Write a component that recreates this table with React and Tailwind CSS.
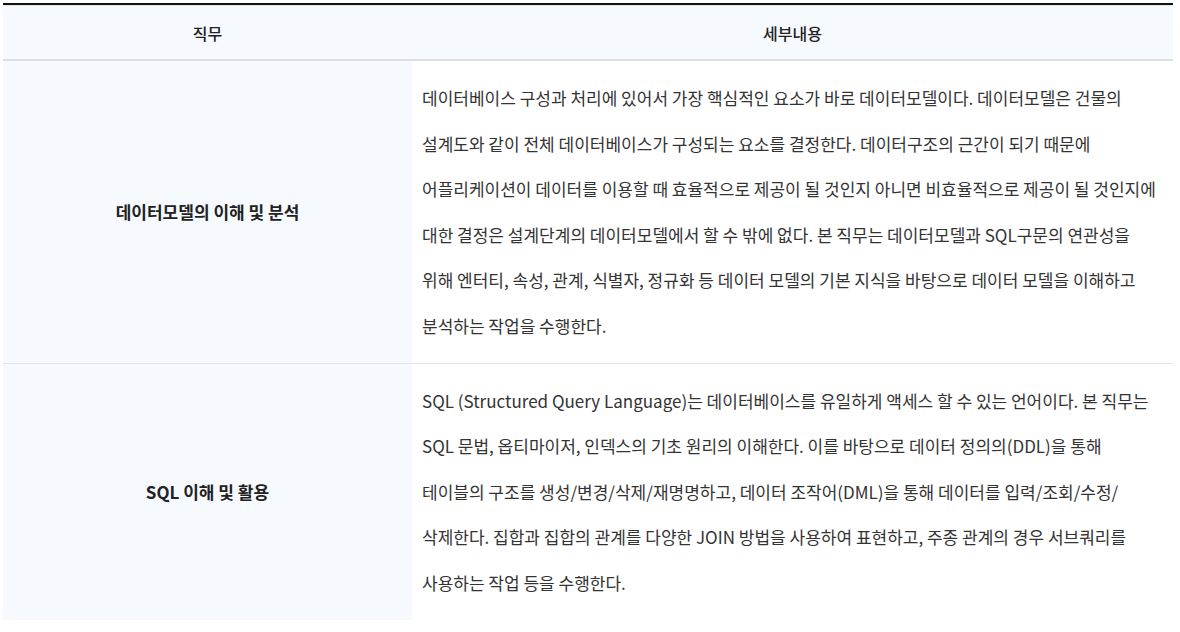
export default function App() {
  const rows = [
    {
      title: "데이터모델의 이해 및 분석",
      lines: [
        "데이터베이스 구성과 처리에 있어서 가장 핵심적인 요소가 바로 데이터모델이다. 데이터모델은 건물의",
        "설계도와 같이 전체 데이터베이스가 구성되는 요소를 결정한다. 데이터구조의 근간이 되기 때문에",
        "어플리케이션이 데이터를 이용할 때 효율적으로 제공이 될 것인지 아니면 비효율적으로 제공이 될 것인지에",
        "대한 결정은 설계단계의 데이터모델에서 할 수 밖에 없다. 본 직무는 데이터모델과 SQL구문의 연관성을",
        "위해 엔터티, 속성, 관계, 식별자, 정규화 등 데이터 모델의 기본 지식을 바탕으로 데이터 모델을 이해하고",
        "분석하는 작업을 수행한다.",
      ],
    },
    {
      title: "SQL 이해 및 활용",
      lines: [
        "SQL (Structured Query Language)는 데이터베이스를 유일하게 액세스 할 수 있는 언어이다. 본 직무는",
        "SQL 문법, 옵티마이저, 인덱스의 기초 원리의 이해한다. 이를 바탕으로 데이터 정의의(DDL)을 통해",
        "테이블의 구조를 생성/변경/삭제/재명명하고, 데이터 조작어(DML)을 통해 데이터를 입력/조회/수정/",
        "삭제한다. 집합과 집합의 관계를 다양한 JOIN 방법을 사용하여 표현하고, 주종 관계의 경우 서브쿼리를",
        "사용하는 작업 등을 수행한다.",
      ],
    },
  ];

  return (
    <div
      className="pl-[3px] pt-[3px] w-[1173px] bg-white"
      style={{ fontFamily: '"Noto Sans CJK KR", "Noto Sans", sans-serif' }}
    >
      <div className="border-t-2 border-[#111]">
        <div className="grid grid-cols-[409px_1fr] bg-[#f6f9fe] border-t border-[#e3e6ea] border-b-2 border-b-[#dcdfe4] h-[56px] text-[16px] font-medium text-[#222]">
          <div className="flex items-center justify-center">직무</div>
          <div className="flex items-center justify-center">세부내용</div>
        </div>
        {rows.map((row, i) => (
          <div
            key={i}
            className={`grid grid-cols-[409px_1fr] ${i === 0 ? "border-b border-[#e1e4e8]" : ""}`}
          >
            <div className="bg-[#f6f9fe] flex items-center justify-center text-[17px] font-semibold text-[#222]">
              {row.title}
            </div>
            <div className="pl-[10px] py-[14px] text-[17px] leading-[45.6px] text-[#333] whitespace-nowrap">
              {row.lines.map((line, j) => (
                <div key={j}>{line}</div>
              ))}
            </div>
          </div>
        ))}
      </div>
    </div>
  );
}
